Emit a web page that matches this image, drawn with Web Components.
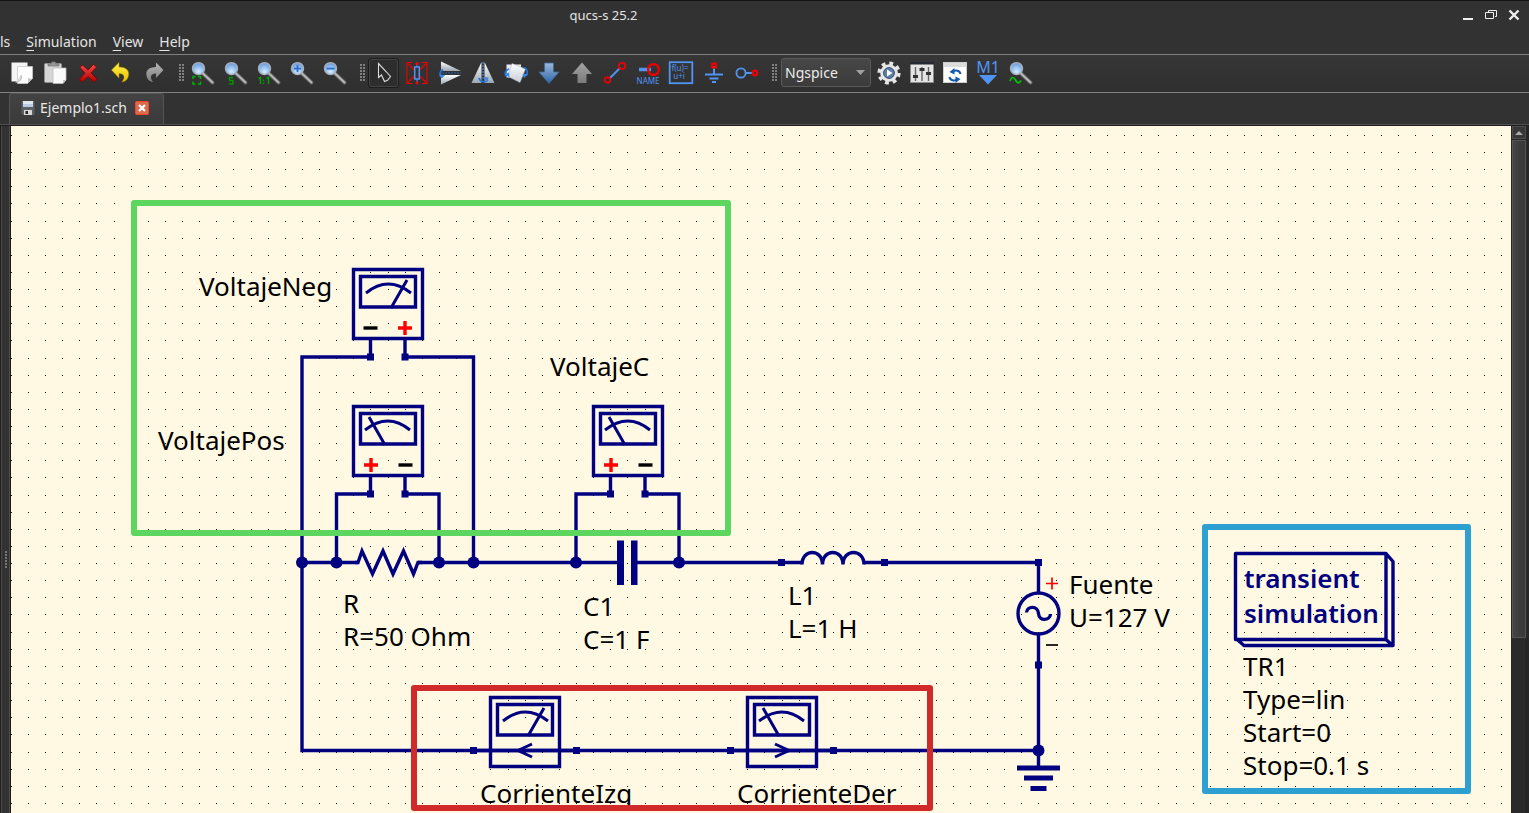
<!DOCTYPE html>
<html lang="es">
<head>
<meta charset="utf-8">
<title>qucs-s 25.2</title>
<style>
  body { margin: 0; background: #323232; }
</style>
</head>
<body>
<qucs-window></qucs-window>

<script>
const define = (name, html, setup) => {
  const template = document.createElement('template');
  template.innerHTML = html.trim();
  customElements.define(name, class extends HTMLElement {
    connectedCallback() {
      if (this.shadowRoot) return;
      this.attachShadow({ mode: 'open' }).append(template.content.cloneNode(true));
      if (setup) setup(this, this.shadowRoot);
    }
  });
};

/* ---------- toolbar icons, 24 x 24 ---------- */
const lens = `
  <defs><radialGradient id="l" cx=".5" cy=".75" r=".7"><stop offset="0" stop-color="#d5ecff"/><stop offset=".6" stop-color="#8fbcec"/><stop offset="1" stop-color="#6a9bd8"/></radialGradient></defs>
  <path d="M11.5 12 21.5 21.5" stroke="#5e5e5e" stroke-width="4" stroke-linecap="round"/>
  <path d="M11.5 12 21.5 21.5" stroke="#b8b8b8" stroke-width="2" stroke-linecap="round"/>
  <circle cx="7.5" cy="7.600" r="6" fill="url(#l)" stroke="#a9b0b8" stroke-width="1.400"/>`;
const steel = (id, a, b) => `<defs><linearGradient id="${id}" x1="0" y1="0" x2="0" y2="1"><stop offset="0" stop-color="${a}"/><stop offset="1" stop-color="${b}"/></linearGradient></defs>`;
const ICONS = {
  copy: `<path d="M1.500 1.500h16v19h-16z" fill="#f4f4f4"/><path d="M7.500 5.500h15v12l-5 5h-10z" fill="#fff" stroke="#c9c9c9" stroke-width=".8"/><path d="M22.500 17.500l-5 5c1-2 1-4 .5-5.500 1.500.8 3.200.8 4.500.5z" fill="#bdbdbd"/><path d="M11 14c1.500 4-1 7-5.500 7.500" fill="#ddd" stroke="#aaa" stroke-width=".8"/>`,
  paste: `<rect x="1.500" y="2.500" width="17" height="19" rx="1" fill="#d6d6d6" stroke="#8f8f8f"/><path d="M5 5V3h3.500V1h4v2H16v2z" fill="#9a9a9a" stroke="#707070" stroke-width=".7"/><path d="M10 7h13v12l-3 3.500H10z" fill="#fafafa" stroke="#bbb" stroke-width=".8"/><path d="M23 19l-3 3.500V19z" fill="#c4c4c4"/>`,
  cut: `${steel('r', '#f04a4a', '#b80000')}<path d="M4 6.500 6.500 4 12 9l5.500-5.500L20.500 6 15 12l6 6-3 3-6-5.500L6.500 21 3.500 18.500 9 12z" fill="url(#r)" stroke="#8c0000" stroke-width=".9"/>`,
  undo: `${steel('y', '#fff04a', '#e6c200')}<path d="M2.500 9 10 1.500V6c7 0 10.500 3.500 9.500 8.500-.5 3.500-3 6-6.500 6.500 3.500-4.500 2.500-8.500-3-8.500v4.500z" fill="url(#y)" stroke="#a88d00" stroke-width=".5"/>`,
  redo: `${steel('g', '#b5b5b5', '#7e7e7e')}<path d="M21.500 9 14 1.500V6C7 6 3.500 9.500 4.500 14.500c.5 3.500 3 6 6.500 6.500-3.500-4.500-2.500-8.500 3-8.500v4.500z" fill="url(#g)"/>`,
  zoomAll: lens + `<path d="M2 18v-2.500h2.500M7 15.500h2.500V18M9.500 20.500V23H7M4.500 23H2v-2.500" stroke="#00b400" stroke-width="1.500"/>`,
  zoomSel: lens + `<path d="M9 16.500H5.500v3H9v3.300H4.800" stroke="#009c00" stroke-width="1.300"/>`,
  zoomOne: lens + `<path d="M1.500 17.500 3.500 16.500v6.500M9.500 17.500l2-1v6.500" stroke="#00a000" stroke-width="1.400"/><path d="M6.500 18.500v1.500M6.500 21.500V23" stroke="#00a000" stroke-width="1.400"/>`,
  zoomIn: lens + `<path d="M7.500 4v7.200M3.900 7.600h7.200" stroke="#2d6fc9" stroke-width="1.800"/>`,
  zoomOut: lens + `<path d="M3.500 7.600h8" stroke="#2d6fc9" stroke-width="1.800"/>`,
  pointer: `<path d="M6.500 2.500v14l3-2.500 3 6.500 3-1.200 3-3.800-4-4.500z" fill="#2b2b2b" stroke="#ddd" stroke-width="1.100"/>`,
  toggle: `<path d="M7 1.500H2v21h5M17 1.500h5v21h-5M3 2.500l18 19M21 2.500 3 21.500" stroke="#f00000" stroke-width="1.100"/><path d="M12 2v20" stroke="#4a90e2"/><rect x="9.700" y="6" width="4.600" height="12" fill="#323232" stroke="#5294f2" stroke-width="1.500"/><circle cx="12" cy="2.500" r="1.500" fill="#f00"/><circle cx="12" cy="22" r="1.500" fill="#f00"/>`,
  flipV: `${steel('s', '#ffffff', '#9ba7b3')}<path d="M3 .5 23 10H3z" fill="url(#s)"/><path d="M3 23.500 23 14H3z" fill="url(#s)"/><path d="M4 12h19" stroke="#2a62b0" stroke-dasharray="2 1"/><path d="M5 8.500C1.500 10 1 14 4 16" stroke="#2277dd" stroke-width="1.700"/><path d="m1 13.500 2.700 4 3.500-3.200z" fill="#3a8ae8"/>`,
  flipH: `${steel('s', '#ffffff', '#9ba7b3')}<path d="M10.500 1v21H.5z" fill="url(#s)"/><path d="M13.500 1v21h10z" fill="url(#s)"/><path d="M12 1v18" stroke="#5294f2" stroke-dasharray="2 1"/><path d="M8 17c1 4 6 5 9 2" stroke="#2277dd" stroke-width="1.700"/><path d="m13 16 4.500.5-1.500 5.500z" fill="#3a8ae8"/>`,
  rotate: `${steel('s', '#ffffff', '#c5ced8')}<path d="M2.500 3.500h14.500v13H2.500z" fill="#e6ebf0"/><path d="m8 2.500 13.500 5.500-5.500 13.500L4 15.500z" fill="url(#s)" stroke="#aab4be" stroke-width=".5"/><path d="M5 8C1 9 .5 13 2.500 15.500M19.500 6.500c3.500.5 4.500 4 3 8" stroke="#2277dd" stroke-width="1.700"/><path d="m.5 13 5 3.500-.5-5zM18.500 13h5.500l-4 4z" fill="#3a8ae8"/>`,
  down: `${steel('d', '#9db8d8', '#2b65ab')}<path d="M7.500 2h9v9H22L12 22.500 2 11h5.500z" fill="url(#d)" stroke="#3d689d" stroke-width=".8"/>`,
  up: `${steel('u', '#a4a4a4', '#7b7b7b')}<path d="M7.500 22h9v-9H22L12 1.500 2 13h5.500z" fill="url(#u)"/>`,
  wire: `<path d="M6.500 17.500 17.500 6.500" stroke="#5294f2" stroke-width="2"/><circle cx="4.500" cy="19" r="2.800" stroke="#f00000" stroke-width="1.800"/><circle cx="19" cy="5" r="3.200" stroke="#f00000" stroke-width="1.800"/>`,
  label: `<path d="M3 8.500h12" stroke="#5294f2" stroke-width="3.500"/><circle cx="17.500" cy="8.500" r="5.400" stroke="#f00000" stroke-width="2.300"/><text x="12" y="23" text-anchor="middle" font-size="8" fill="#5294f2">NAME</text>`,
  equation: `<rect x=".7" y="1.200" width="22.600" height="21" stroke="#5294f2" stroke-width="1.800"/><text x="11" y="10" text-anchor="middle" font-size="8" fill="#5294f2">f(u)=</text><text x="10" y="18" text-anchor="middle" font-size="8" fill="#5294f2">u+i</text>`,
  ground: `<path d="M12 5v8" stroke="#5294f2" stroke-width="2"/><path d="M3 13.500h18M7.500 17.500h9M10 21h4" stroke="#5294f2" stroke-width="2.200"/><circle cx="12" cy="4.500" r="2.200" stroke="#f00000" stroke-width="2.200"/>`,
  port: `<path d="M10.500 12h8" stroke="#5294f2" stroke-width="2"/><circle cx="6" cy="12" r="4.600" stroke="#5294f2" stroke-width="1.800"/><circle cx="20" cy="12" r="2.300" stroke="#f00000" stroke-width="2.200"/>`,
  simulate: `<circle cx="12" cy="12" r="9.800" stroke="#e6e6e6" stroke-width="3.600" stroke-dasharray="3.800 3.900"/><circle cx="12" cy="12" r="8.800" fill="#e6e6e6"/><circle cx="12" cy="12" r="5.400" fill="#5b7da6" stroke="#2f4d75"/><path d="M10 8.500v7l5.500-3.500z" fill="#fff"/>`,
  tune: `<rect x=".5" y="1.500" width="23" height="20" fill="#e4e4e4" stroke="#8b8b8b"/><path d="M0 1h24v2.500H0z" fill="#242a30"/><path d="M5.500 6v14M12 6v14M18.500 6v14" stroke="#666" stroke-width="1.400"/><path d="M3 14h5v3H3zM9.500 7h5v3h-5zM16 11h5v3h-5z" fill="#333"/>`,
  swap: `<rect x=".5" y="1.500" width="23" height="20" fill="#fff" stroke="#d0d0d0"/><path d="M1 2h22v4H1z" fill="#dcdcdc"/><path d="M17.500 13c-.5-3.500-5-4.500-7.500-2.500M6.500 16c.5 3.500 5 4.500 7.500 2.500" stroke="#1558ad" stroke-width="2"/><path d="m11.500 7-5 4 5 2.500zM12.500 22l5-4-5-2.500z" fill="#1558ad"/>`,
  marker: `<text x="12" y="12" text-anchor="middle" font-size="16" fill="#5294f2">M1</text><path d="M3 14h18l-9 9.500z" fill="#5294f2"/>`,
  plot: lens + `<path d="M1 20c1.500-4.500 3.500-4.500 5.500-1s3.500 4 5.500.5" stroke="#00c400" stroke-width="1.700"/>`,
};

define('tool-button', `
<style>
  :host { display: block; flex: none; }
  button { display: grid; place-items: center; width: 33px; height: 32px; margin: 0; padding: 0; border: 0; background: none; }
  svg { width: 24px; height: 24px; overflow: visible; font-family: "Noto Sans", sans-serif; }
  :host([pressed]) button { width: 31px; height: 30px; margin: 1px; border: 1px solid #1c1c1c; border-radius: 3px; background: #2d2d2d; box-shadow: inset 0 0 0 1px #444; }
</style>
<button type="button"><svg viewBox="0 0 24 24" fill="none" aria-hidden="true"></svg></button>`,
(host, root) => {
  root.querySelector('svg').innerHTML = ICONS[host.getAttribute('icon')];
  root.querySelector('button').setAttribute('aria-label', host.getAttribute('label'));
});

define('tool-grip', `
<style>
  :host { display: flex; flex: none; width: 16px; box-sizing: border-box; padding-left: 9px; }
  i { width: 5px; height: 17px; background: repeating-linear-gradient(transparent 0 2px, #323232 2px 3px), repeating-linear-gradient(90deg, #808080 0 2px, #323232 2px 3px); }
</style><i></i>`);

define('tool-bar', `
<style>
  :host { display: flex; align-items: center; box-sizing: border-box; height: 39px; padding: 0 0 2px 5px; border-top: 1px solid #808080; border-bottom: 1px solid #808080; overflow: hidden; background: linear-gradient(#363636, #2f2f2f); }
  .combo { position: relative; flex: none; width: 90px; height: 29px; margin: 0 1px 0 2px; }
  select { appearance: none; width: 100%; height: 100%; padding: 0 3px; border: 1px solid #5a5a5a; border-radius: 3px; background: linear-gradient(#474747, #3b3b3b); color: #ececec; font: 14px/24px "Noto Sans", sans-serif; }
  .combo svg { position: absolute; right: 6px; top: 12px; width: 9px; height: 5px; pointer-events: none; }
</style>
<tool-button icon="copy" label="Copy"></tool-button>
<tool-button icon="paste" label="Paste"></tool-button>
<tool-button icon="cut" label="Delete"></tool-button>
<tool-button icon="undo" label="Undo"></tool-button>
<tool-button icon="redo" label="Redo"></tool-button>
<tool-grip></tool-grip>
<tool-button icon="zoomAll" label="View all"></tool-button>
<tool-button icon="zoomSel" label="Zoom to selection"></tool-button>
<tool-button icon="zoomOne" label="View 1:1"></tool-button>
<tool-button icon="zoomIn" label="Zoom in"></tool-button>
<tool-button icon="zoomOut" label="Zoom out"></tool-button>
<tool-grip></tool-grip>
<tool-button icon="pointer" label="Select" pressed></tool-button>
<tool-button icon="toggle" label="Deactivate or activate"></tool-button>
<tool-button icon="flipV" label="Mirror about X axis"></tool-button>
<tool-button icon="flipH" label="Mirror about Y axis"></tool-button>
<tool-button icon="rotate" label="Rotate"></tool-button>
<tool-button icon="down" label="Go into subcircuit"></tool-button>
<tool-button icon="up" label="Pop out"></tool-button>
<tool-button icon="wire" label="Wire"></tool-button>
<tool-button icon="label" label="Wire label"></tool-button>
<tool-button icon="equation" label="Insert equation"></tool-button>
<tool-button icon="ground" label="Insert ground"></tool-button>
<tool-button icon="port" label="Insert port"></tool-button>
<tool-grip></tool-grip>
<div class="combo">
  <select aria-label="Simulator"><option>Ngspice</option></select>
  <svg viewBox="0 0 9 5" aria-hidden="true"><path d="M0 0h9L4.500 5z" fill="#a0a0a0"/></svg>
</div>
<tool-button icon="simulate" label="Simulate"></tool-button>
<tool-button icon="tune" label="Tune"></tool-button>
<tool-button icon="swap" label="View data display"></tool-button>
<tool-button icon="marker" label="Set marker on graph"></tool-button>
<tool-button icon="plot" label="Calculate DC bias"></tool-button>`);

define('title-bar', `
<style>
  :host { display: flex; align-items: center; box-sizing: border-box; height: 30px; border-top: 1px solid #141414; padding: 0 4px 2px 0; }
  h1 { flex: 1; margin: 0; padding-left: 8px; text-align: center; font-size: 13px; line-height: 24px; font-weight: 400; color: #e4e4e4; }
  /* as wide as the part of the title bar that lies off the left side, so the title stays centred on the full window */
  .controls { display: flex; justify-content: flex-end; width: 326px; }
  button { display: grid; place-items: center; width: 23px; height: 24px; padding: 0; border: 0; background: none; }
  svg { width: 12px; height: 12px; }
</style>
<h1>qucs-s 25.2</h1>
<div class="controls">
  <button type="button" aria-label="Minimize"><svg viewBox="0 0 12 12"><path d="M1 9h10v2H1z" fill="#eee"/></svg></button>
  <button type="button" aria-label="Restore"><svg viewBox="0 0 12 12" fill="none" stroke="#eee"><path d="M3.500 3V1.500h8v6H10M.5 3.500h8v6h-8z"/></svg></button>
  <button type="button" aria-label="Close"><svg viewBox="0 0 12 12"><path d="m1.500 1.500 9 9M10.500 1.500l-9 9" stroke="#eee" stroke-width="2.400"/></svg></button>
</div>`);

define('menu-bar', `
<style>
  :host { display: flex; gap: 16px; height: 24px; }
  button { padding: 0; border: 0; background: none; color: #e4e4e4; font: inherit; font-size: 14px; line-height: 24px; white-space: nowrap; }
  u { text-underline-offset: 3px; text-decoration-thickness: 1px; }
</style>
<button type="button">ls</button>
<button type="button"><u>S</u>imulation</button>
<button type="button"><u>V</u>iew</button>
<button type="button"><u>H</u>elp</button>`);

define('doc-tabs', `
<style>
  :host { display: flex; align-items: flex-end; box-sizing: border-box; height: 33px; padding: 0 0 1px 9px; box-shadow: inset 0 -1px #505050; border-bottom: 1px solid #1e1e1e; }
  .tab { display: flex; align-items: center; box-sizing: border-box; width: 155px; height: 31px; padding: 0 14px 2px 11px; border: 1px solid #555; border-bottom: 0; border-radius: 3px 3px 0 0; background: linear-gradient(#434343, #3a3a3a); }
  button { padding: 0; border: 0; background: none; color: #e8e8e8; font: inherit; font-size: 14px; line-height: 24px; }
  .name { flex: 1; display: flex; align-items: center; gap: 5px; }
  .x { display: block; height: 14px; }
  svg { display: block; width: 14px; height: 14px; }
</style>
<div class="tab">
  <button class="name" type="button"><svg viewBox="0 0 14 14" aria-hidden="true"><path d="M.5 0h13v14H2L.5 12.500z" fill="#5b6066"/><path d="M2 0h10v6H2z" fill="#dfe7f1"/><path d="M2 3h10v3H2z" fill="#b9cbe4"/><path d="M3 9h8v5H3z" fill="#d8d8d8"/><path d="M4.500 10h2.500v3H4.500z" fill="#222"/></svg>Ejemplo1.sch</button>
  <button class="x" type="button" aria-label="Close tab"><svg viewBox="0 0 14 14"><rect x=".5" y=".5" width="13" height="13" rx="1" fill="#dc6a4c" stroke="#f0452c"/><path d="m4 4 6 6M10 4l-6 6" stroke="#fff" stroke-width="2.200"/></svg></button>
</div>`);

/* ---------- schematic symbols ---------- */
define('sch-meter', `
<style>
  :host { position: absolute; display: block; width: 72px; height: 94px; }
  svg { display: block; width: 100%; height: 100%; overflow: visible; }
  :host([flip]) .dial { transform: translateX(72px) scaleX(-1); }
  .volt, .amp { display: none; }
  :host([kind="volt"]) .volt, :host([kind="amp"]) .amp { display: inline; }
  :host([kind="amp"]) { width: 104px; height: 72px; }
</style>
<svg fill="none" stroke="#000080" stroke-width="3.400" role="img">
  <g class="frame">
    <path d="M1.500 1.500h69v69h-69z"/><path d="M8.500 8.500h55v30.500h-55z"/>
  </g>
  <g class="dial" stroke-width="3">
    <path d="M14 25Q36 7 59 25M39 40 55 12"/>
    <path class="volt" stroke="#000" stroke-width="3.400" d="M11.500 60h14"/>
    <path class="volt" stroke="#f00" stroke-width="3.400" d="M46 60h14M53 53v14"/>
    <path class="amp" d="M43 48 29 54.500 43 61"/>
  </g>
  <path class="volt" d="M18.500 72v17M53 72v17"/>
  <path class="volt" fill="#000080" stroke="none" d="M15 85.500h7v7h-7zM49.500 85.500h7v7h-7z"/>
  <path class="amp" d="M-15 54.500H87"/>
  <path class="amp" fill="#000080" stroke="none" d="M-19 51h7v7h-7zM84 51h7v7h-7z"/>
</svg>`,
(host, root) => root.querySelector('svg').setAttribute('aria-label', host.getAttribute('label')));

define('sch-text', `<style>
  :host { position: absolute; display: block; font-size: 26px; line-height: 33px; color: #000; white-space: pre; }
</style><slot></slot>`);

define('sch-frame', `
<style>
  :host { position: absolute; display: block; box-sizing: border-box; border: 6px solid var(--ink); border-radius: 3px; }
</style>`);

define('sch-simulation', `
<style>
  :host { position: absolute; display: block; width: 161px; height: 96px; }
  svg { position: absolute; inset: 0; width: 100%; height: 100%; overflow: visible; }
  p { position: relative; margin: 0; padding: 9px 0 0 11px; font-size: 26px; line-height: 35px; font-weight: 600; color: #000080; white-space: nowrap; }
</style>
<svg fill="none" stroke="#000080" stroke-width="3.400" stroke-linejoin="round" aria-hidden="true">
  <path d="M2.500 1.500h150.500v86h-150.500zM153 1.500l7 8v84h-149l-8.500-7.500M153 87.500l6 5.500"/>
</svg>
<p>transient<br>simulation</p>`);

define('schematic-view', `
<style>
  :host { position: relative; display: block; overflow: hidden; background: #fff9e3; }
  .net { position: absolute; inset: 0; width: 100%; height: 100%; }
</style>
<svg class="net" fill="none" stroke="#000080" stroke-width="3.400" aria-hidden="true">
  <path class="grid" stroke="#111" stroke-width="1" shape-rendering="crispEdges"/>
  <!-- wires -->
  <path d="M359.500 231H291V436.500M394 231H462.500V436.500M359.500 368H325.500V436.500M394 368H428V436.500M599 368H565V436.500M633.500 368H668V436.500"/>
  <path d="M291 436.500V624.500H1027.500M291 436.500H347M407 436.500H606M626 436.500H791M853 436.500H1027.500V467M1027.500 508.500V642"/>
  <!-- resistor, inductor, source -->
  <path d="M344 436.500h3L351 425 361.500 448 372 425 382 448 392.500 425 402.500 448 407 436.500h4"/>
  <path d="M791 438.500C791 422.500 811.500 422.500 811.500 438.500C811.500 422.500 832 422.500 832 438.500C832 422.500 853 422.500 853 438.500"/>
  <circle cx="1027.500" cy="487.500" r="20.500"/>
  <path d="M1015.500 486.500C1016 479.500 1027 479.500 1027.500 487.500S1039 495 1039.500 488"/>
  <path stroke="#f00" stroke-width="1.700" d="M1035 457.500h12M1041 451.500v12"/>
  <path stroke="#000" stroke-width="1.700" d="M1035 519h12"/>
  <!-- capacitor plates, ground, joints -->
  <g fill="#000080" stroke="none">
    <path d="M606 414.500h7v44.500h-7zM620 414.500h6.500v44.500h-6.500zM1006 639.500h43v5h-43zM1013 649.500h29v5h-29zM1019.500 660h16v5h-16z"/>
    <path d="M767 433h7v7h-7zM870 433h7v7h-7zM1024 433h7v7h-7zM1024 535.500h7v7h-7z"/>
    <circle cx="291" cy="436.500" r="6"/><circle cx="325.500" cy="436.500" r="6"/><circle cx="428" cy="436.500" r="6"/><circle cx="462.500" cy="436.500" r="6"/>
    <circle cx="565" cy="436.500" r="6"/><circle cx="668" cy="436.500" r="6"/><circle cx="1027.500" cy="624.500" r="6"/>
  </g>
</svg>
<slot></slot>`,
(host, root) => {
  /* grid of ten schematic units at the current zoom, snapped to device pixels */
  const pitch = 17.128;
  let d = '';
  for (let row = 0; row < 100; row++) {
    const y = Math.round(8.9 + row * pitch) + 0.5;
    for (let col = 0; col < 180; col++) d += `M${Math.round(col * pitch - 0.2)} ${y}h1`;
  }
  root.querySelector('.grid').setAttribute('d', d);
});

define('scroll-rail', `
<style>
  :host { display: flex; flex-direction: column; box-sizing: border-box; width: 18px; padding: 0 3px 0 1px; background: #262626; border-right: 1px solid #262626; }
  button { display: grid; place-items: center; box-sizing: border-box; width: 14px; height: 13px; padding: 0; border: 1px solid #4e4e4e; background: #373737; }
  svg { width: 8px; height: 4px; }
  .track { flex: 1; margin-top: 1px; background: #2a2a2a; }
  .thumb { box-sizing: border-box; width: 14px; height: 74%; border: 1px solid #555; background: linear-gradient(90deg, #444, #373737); }
</style>
<button type="button" aria-label="Scroll up"><svg viewBox="0 0 8 4"><path d="M0 4h8L4 0z" fill="#aaa"/></svg></button>
<div class="track"><div class="thumb"></div></div>`);

define('qucs-window', `
<style>
  :host { display: flex; flex-direction: column; height: 100vh; overflow: hidden; background: #323232; font-family: "Noto Sans", sans-serif; }
  title-bar, menu-bar, tool-bar, doc-tabs { flex: none; }
  main { flex: 1; min-height: 0; display: grid; grid-template-columns: 11px 1fr 18px; }
  .dock { display: flex; align-items: center; padding-left: 5px; border-right: 1px solid #1c1c1c; box-shadow: inset -1px 0 #4c4c4c, inset 1px 0 #1f1f1f, inset 2px 0 #484848; }
  .dock i { width: 2px; height: 17px; margin-top: 180px; background: repeating-linear-gradient(#777 0 2px, #323232 2px 3px); }
</style>
<title-bar></title-bar>
<menu-bar></menu-bar>
<tool-bar></tool-bar>
<doc-tabs></doc-tabs>
<main>
  <div class="dock"><i></i></div>
  <schematic-view>
    <sch-meter kind="volt" label="VoltajeNeg" style="left:341px;top:142px"></sch-meter>
    <sch-meter kind="volt" label="VoltajePos" flip style="left:341px;top:279px"></sch-meter>
    <sch-meter kind="volt" label="VoltajeC" flip style="left:581px;top:279px"></sch-meter>
    <sch-meter kind="amp" label="CorrienteIzq" style="left:478px;top:570px"></sch-meter>
    <sch-meter kind="amp" label="CorrienteDer" flip style="left:735px;top:570px"></sch-meter>
    <sch-simulation style="left:1222px;top:426px"></sch-simulation>
    <sch-text style="left:188px;top:144px">VoltajeNeg</sch-text>
    <sch-text style="left:147px;top:298px">VoltajePos</sch-text>
    <sch-text style="left:539px;top:224px">VoltajeC</sch-text>
    <sch-text style="left:332px;top:461px">R
R=50 Ohm</sch-text>
    <sch-text style="left:572px;top:464px">C1
C=1 F</sch-text>
    <sch-text style="left:777px;top:453px">L1
L=1 H</sch-text>
    <sch-text style="left:1058px;top:442px">Fuente
U=127 V</sch-text>
    <sch-text style="left:1232px;top:524px">TR1
Type=lin
Start=0
Stop=0.1 s</sch-text>
    <sch-text style="left:469px;top:651px">CorrienteIzq</sch-text>
    <sch-text style="left:726px;top:651px">CorrienteDer</sch-text>
    <sch-frame style="--ink:#5cd65f;left:120px;top:74px;width:600px;height:336px"></sch-frame>
    <sch-frame style="--ink:#d02a2a;left:400px;top:559px;width:522px;height:126px"></sch-frame>
    <sch-frame style="--ink:#2d9fd0;left:1191px;top:398px;width:269px;height:270px"></sch-frame>
  </schematic-view>
  <scroll-rail></scroll-rail>
</main>`);
</script>
</body>
</html>
